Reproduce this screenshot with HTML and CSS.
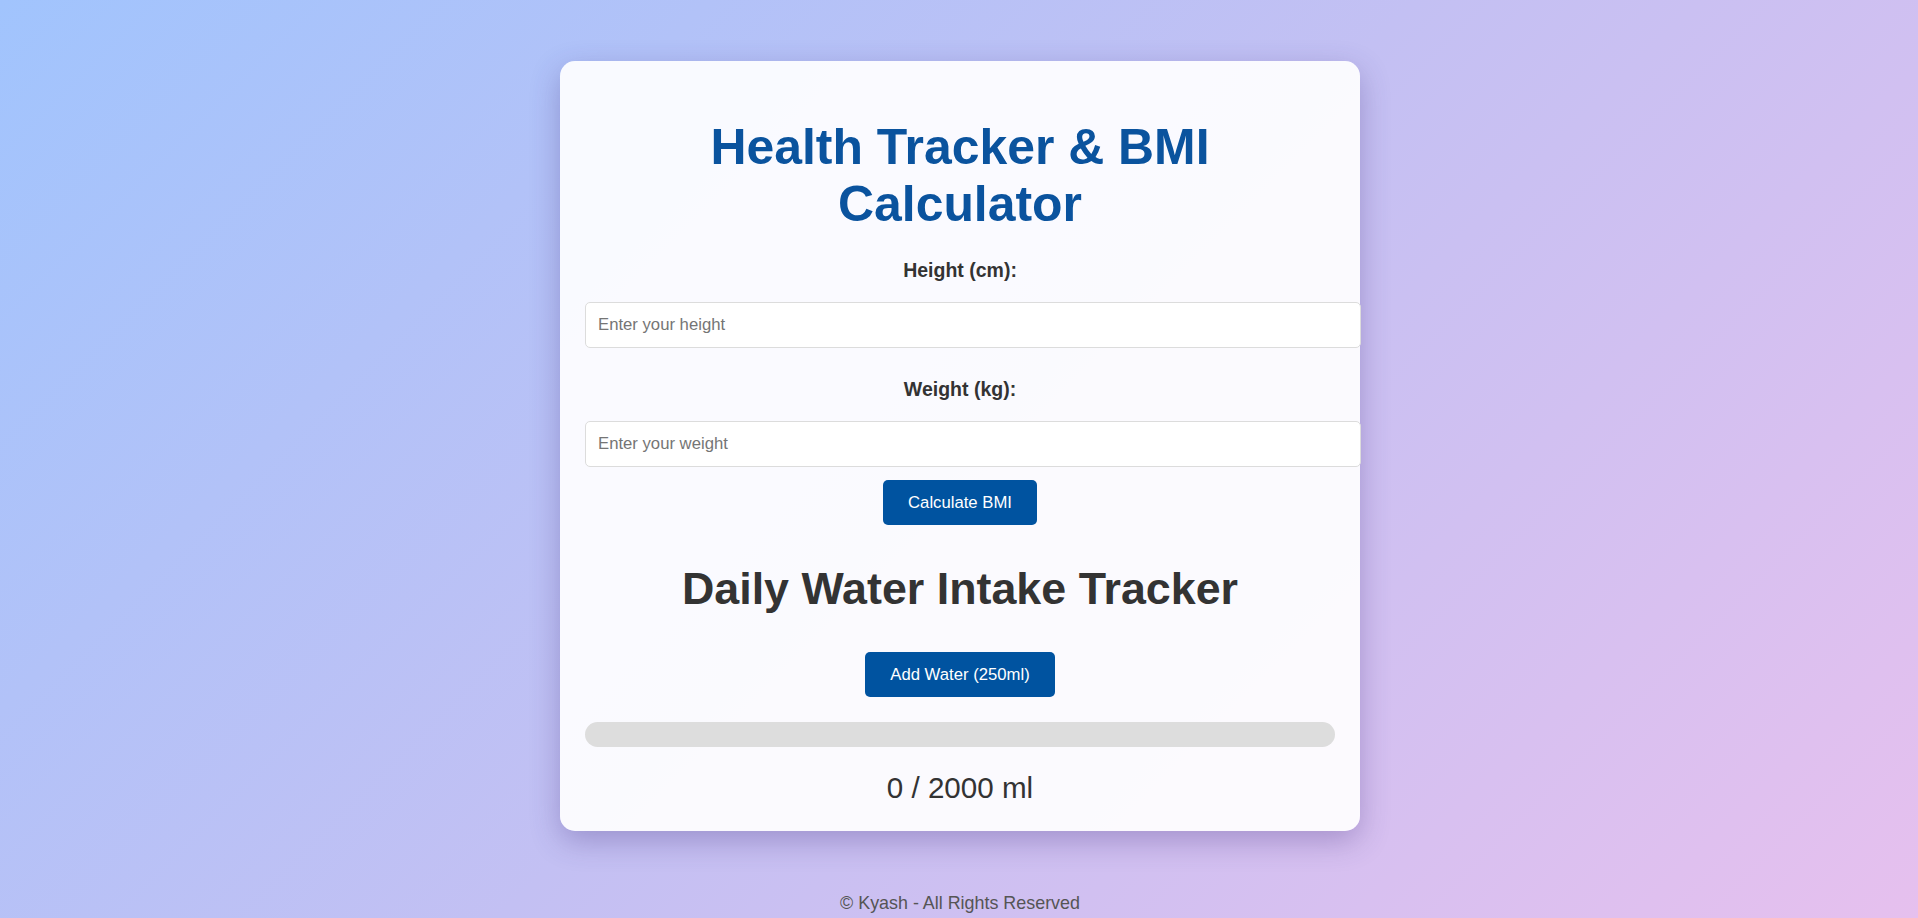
FILE: index.html
```html
<!DOCTYPE html>
<html lang="en">
<head>
<meta charset="UTF-8">
<title>Health Tracker &amp; BMI Calculator</title>
<link rel="stylesheet" href="styles.css">
</head>
<body>
<main class="card">
  <h1 class="title">Health Tracker &amp; BMI Calculator</h1>
  <label class="label" for="height">Height (cm):</label>
  <input class="field field-first" id="height" type="number" placeholder="Enter your height">
  <label class="label" for="weight">Weight (kg):</label>
  <input class="field field-last" id="weight" type="number" placeholder="Enter your weight">
  <div class="actions"><button class="btn">Calculate BMI</button></div>
  <h2 class="subtitle">Daily Water Intake Tracker</h2>
  <div class="actions"><button class="btn">Add Water (250ml)</button></div>
  <div class="progress"><div class="progress-fill"></div></div>
  <p class="amount">0 / 2000 ml</p>
</main>
<footer class="footer">© Kyash - All Rights Reserved</footer>
</body>
</html>
```
FILE: styles.css
```css
html {
  height: 100%;
}
body {
  margin: 0;
  min-height: 100%;
  background: linear-gradient(135deg, #a1c4fd 0%, #c3c0f3 50%, #e6c0ee 100%);
  font-family: "Liberation Sans", Arial, sans-serif;
  color: #333;
  display: flex;
  flex-direction: column;
  align-items: center;
}
.card {
  box-sizing: border-box;
  width: 800px;
  margin: 61px 0 0 2px;
  padding: 25px 25px 26px;
  background: rgba(255, 255, 255, 0.92);
  border-radius: 15px;
  box-shadow: 0 10px 30px rgba(60, 40, 120, 0.3);
  text-align: center;
}
.title {
  margin: 33px 0 26px;
  font-size: 49.9px;
  font-weight: bold;
  line-height: 57px;
  color: #0a539e;
}
.label {
  display: block;
  font-size: 19.5px;
  font-weight: bold;
  line-height: 23px;
  color: #333;
  margin: 0 0 20px;
}
.field {
  display: block;
  width: 100%;
  height: 20px;
  padding: 12px;
  border: 1px solid #dcdcdc;
  border-radius: 5px;
  background: #fff;
  font-family: "Liberation Sans", Arial, sans-serif;
  font-size: 16.7px;
  color: #333;
  text-align: left;
  margin: 0;
}
.field::placeholder {
  color: #757575;
}
.field-first {
  margin-bottom: 30px;
}
.field-last {
  margin-bottom: 13px;
}
.actions {
  display: flex;
  justify-content: center;
}
.btn {
  height: 45px;
  padding: 0 25px;
  border: none;
  border-radius: 5px;
  background: #0053a0;
  color: #fff;
  font-family: "Liberation Sans", Arial, sans-serif;
  font-size: 16.7px;
  cursor: pointer;
}
.subtitle {
  margin: 38px 0 38px;
  font-size: 44.8px;
  font-weight: bold;
  line-height: 51px;
  color: #333;
}
.progress {
  margin-top: 25px;
  height: 25px;
  border-radius: 13px;
  background: #dddddd;
  overflow: hidden;
}
.progress-fill {
  width: 0;
  height: 100%;
  background: #0053a0;
}
.amount {
  margin: 24px 0 0;
  font-size: 29.6px;
  line-height: 34px;
  color: #333;
}
.footer {
  margin: 62px 0 0 2px;
  font-size: 17.9px;
  line-height: 20px;
  color: #555;
}
```
